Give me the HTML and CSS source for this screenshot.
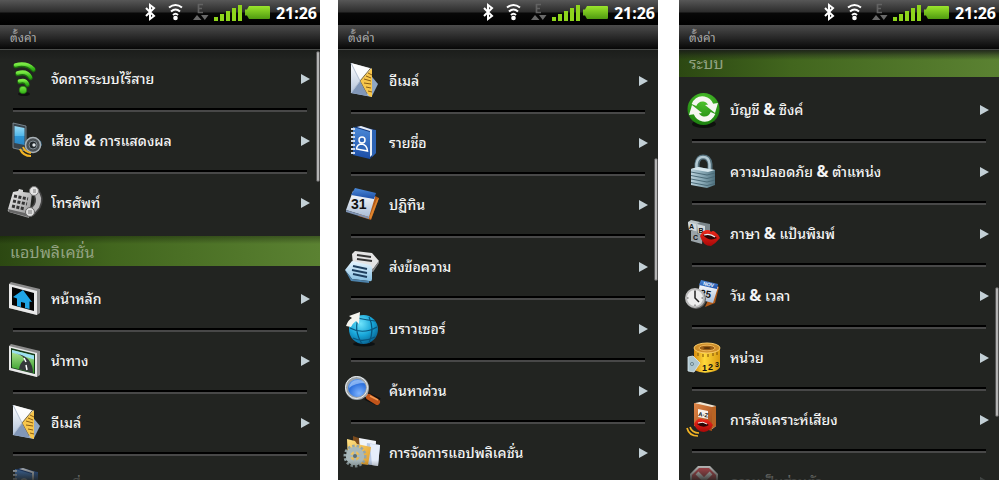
FILE: index.html
```html
<!DOCTYPE html>
<html lang="th">
<head>
<meta charset="utf-8">
<meta name="viewport" content="width=device-width, initial-scale=1">
<title>ตั้งค่า</title>
<link rel="stylesheet" href="styles.css">
</head>
<body>
<svg class="sprite" aria-hidden="true">
  <defs>
    <linearGradient id="g-green" x1="0" y1="0" x2="0" y2="1"><stop offset="0" stop-color="#9be52c"/><stop offset="1" stop-color="#4f9a10"/></linearGradient>
    <linearGradient id="g-wifi" x1="0" y1="0" x2="0" y2="1"><stop offset="0" stop-color="#7bea45"/><stop offset="1" stop-color="#2fae14"/></linearGradient>
    <linearGradient id="g-screen" x1="0" y1="0" x2="0" y2="1"><stop offset="0" stop-color="#9adcf6"/><stop offset=".5" stop-color="#55b9ea"/><stop offset=".52" stop-color="#2e97d6"/><stop offset="1" stop-color="#2a86c4"/></linearGradient>
    <linearGradient id="g-metal" x1="0" y1="0" x2="1" y2="1"><stop offset="0" stop-color="#f4f4f4"/><stop offset="1" stop-color="#8c8c8c"/></linearGradient>
    <linearGradient id="g-paper" x1="0" y1="0" x2="0" y2="1"><stop offset="0" stop-color="#ffffff"/><stop offset="1" stop-color="#a9bcd6"/></linearGradient>
    <linearGradient id="g-blue" x1="0" y1="0" x2="0" y2="1"><stop offset="0" stop-color="#4c8ad8"/><stop offset="1" stop-color="#1c4da6"/></linearGradient>
    <linearGradient id="g-sky" x1="0" y1="0" x2="0" y2="1"><stop offset="0" stop-color="#e8f6ff"/><stop offset="1" stop-color="#86bfe2"/></linearGradient>
    <radialGradient id="g-globe" cx=".4" cy=".3" r=".75"><stop offset="0" stop-color="#6fe3fb"/><stop offset=".55" stop-color="#17a5d8"/><stop offset="1" stop-color="#07608f"/></radialGradient>
    <radialGradient id="g-lens" cx=".6" cy=".75" r=".8"><stop offset="0" stop-color="#7fb4ff"/><stop offset=".6" stop-color="#2c70dc"/><stop offset="1" stop-color="#7db0f2"/></radialGradient>
    <radialGradient id="g-sync" cx=".5" cy=".25" r=".8"><stop offset="0" stop-color="#4fc42e"/><stop offset="1" stop-color="#187c0c"/></radialGradient>
    <linearGradient id="g-lock" x1="0" y1="0" x2="1" y2="0"><stop offset="0" stop-color="#b9d0da"/><stop offset=".5" stop-color="#86a7b4"/><stop offset="1" stop-color="#4f717e"/></linearGradient>
    <linearGradient id="g-gold" x1="0" y1="0" x2="1" y2="0"><stop offset="0" stop-color="#d98d10"/><stop offset=".4" stop-color="#ffd93a"/><stop offset="1" stop-color="#d99a10"/></linearGradient>
    <linearGradient id="g-folder" x1="0" y1="0" x2="1" y2="1"><stop offset="0" stop-color="#ffe184"/><stop offset="1" stop-color="#e09a26"/></linearGradient>
    <linearGradient id="g-red" x1="0" y1="0" x2="0" y2="1"><stop offset="0" stop-color="#f02a1c"/><stop offset="1" stop-color="#a80808"/></linearGradient>
    <linearGradient id="g-book" x1="0" y1="0" x2="1" y2="1"><stop offset="0" stop-color="#e0884a"/><stop offset="1" stop-color="#a04a14"/></linearGradient>
    <linearGradient id="g-grass" x1="0" y1="0" x2="0" y2="1"><stop offset="0" stop-color="#b8e89a"/><stop offset="1" stop-color="#2d9a22"/></linearGradient>
  </defs>

  <symbol id="s-status" viewBox="0 0 128 25">
    <path d="M2 8l8 8-4 3V5l4 3-8 8" fill="none" stroke="#fff" stroke-width="2"/>
    <g fill="none" stroke="#fff" stroke-width="2">
      <path d="M25 7.500q6.500-5 13 0"/><path d="M27 11.500q4.500-4 9 0"/><path d="M29 15q2.500-2.500 5 0"/>
    </g>
    <circle cx="31.500" cy="18" r="2.300" fill="#fff"/>
    <path d="M59 4.500h-4.500v8H59M54.500 8.500H58" fill="none" stroke="#626262" stroke-width="1.700"/>
    <path d="M49 20l4-5 4.500 5zM57 15h7.500l-3.700 5z" fill="#696969"/>
    <g fill="#8ed51c"><path d="M70 17h4v4h-4zM76 14h4v7h-4zM82 11h4v10h-4zM88 8h4v13h-4zM94 5h4v16h-4z"/></g>
    <path d="M101 9.500h2l2-3.500h20q1 0 1 1v11q0 1-1 1h-20l-2-3.500h-2z" fill="url(#g-green)"/>
  </symbol>

  <symbol id="i-wifi" viewBox="0 0 40 40">
    <ellipse cx="19" cy="35" rx="6" ry="2" fill="#111"/>
    <g fill="none" stroke="#1c6d0d" stroke-width="4.500" stroke-linecap="round"><path d="M10.500 7q11-3 18 4"/><path d="M12.500 15q9-3 13 4"/><path d="M14.500 23q6-2 8 3"/></g>
    <g fill="none" stroke="url(#g-wifi)" stroke-width="3.500" stroke-linecap="round"><path d="M10.500 6q11-3 18 4"/><path d="M12.500 14q9-3 13 4"/><path d="M14.500 22q6-2 8 3"/></g>
    <circle cx="18" cy="31" r="3.800" fill="url(#g-wifi)" stroke="#1c6d0d" stroke-width=".6"/>
  </symbol>

  <symbol id="i-sound" viewBox="0 0 40 40">
    <path d="M8 2l13 3v25L8 27z" fill="#39434a" stroke="#8896a0" stroke-width=".8"/>
    <path d="M9.500 5l10 2v17l-10-2z" fill="url(#g-screen)"/>
    <path d="M28 17l8 3 1 4-4 6z" fill="#315f7d"/>
    <circle cx="28" cy="24" r="7.500" fill="#4b5155" stroke="#a9b1b6" stroke-width="1.500"/>
    <circle cx="28" cy="24" r="4" fill="#20262a" stroke="#7f8a91"/><circle cx="29" cy="24" r="1.700" fill="#dfe6ea"/>
    <path d="M18 26q2 5 8 6M15 28q3 7 11 7" fill="none" stroke="#f2b425" stroke-width="2"/>
  </symbol>

  <symbol id="i-phone" viewBox="0 0 40 40">
    <path d="M8 9l5-1 1-2 4 1v2l9 1-3 25L4 29q-2-1-1-3z" fill="url(#g-metal)"/>
    <path d="M3 26l21 5v3L4 29z" fill="#666"/>
    <g stroke="#333" stroke-width="3" stroke-dasharray="3 1.500"><path d="M9 13l14 3M8 18l14 3M7 23l13 3"/></g>
    <path d="M30 8q6 7 2 15l-5 6" fill="none" stroke="#444" stroke-width="8" stroke-linecap="round"/>
    <path d="M30 8q6 7 2 15l-5 6" fill="none" stroke="#b8b8b8" stroke-width="5" stroke-linecap="round"/>
    <circle cx="29" cy="8" r="4.500" fill="#e4e4e4" stroke="#777"/><circle cx="25" cy="29" r="4.500" fill="#ddd" stroke="#666"/>
    <path d="M23 28h4M23 30h4M28 7h3M28 9h3" stroke="#777"/>
  </symbol>

  <symbol id="i-home" viewBox="0 0 40 40">
    <path d="M4 5l2-2 29 7v24l-3 2-28-7z" fill="#8d8d8d"/><path d="M4 5l28 7v24L4 29z" fill="#e9e9e9"/>
    <path d="M7 8l22 6v18L7 26z" fill="#050505"/>
    <path d="M18 11l9 12-2.500-.5V30l-4.500-1V24l-4-1v5l-4-1v-7.500L8 18z" fill="#1fa6e8"/>
  </symbol>

  <symbol id="i-nav" viewBox="0 0 40 40">
    <path d="M4 5l2-2 29 7v24l-3 2-28-7z" fill="#8d8d8d"/><path d="M4 5l28 7v24L4 29z" fill="#e9e9e9"/>
    <path d="M6 7l24 6v20L6 27z" fill="#143a18"/><path d="M7 9l22 5.500V32L7 26.500z" fill="url(#g-grass)"/>
    <path d="M7 9l22 5.500v4L7 11.500z" fill="#9ce1f1"/>
    <path d="M10 12q10 3 9 7-4 3-5 9l14 4q0-8-5-14-4-4-13-6z" fill="#35383a"/>
    <path d="M19 17l2 4M21 24l1 5" stroke="#fff" stroke-width="1.500"/>
  </symbol>

  <symbol id="i-mail" viewBox="0 0 40 40">
    <path d="M25 11l10 12-6 12-5-8z" fill="#8fa7c4"/>
    <path d="M8 2l21 6v28L8 32z" fill="url(#g-paper)"/>
    <path d="M29 7L17 20l9 15 3 1z" fill="#f7c64c"/>
    <path d="M27 8l-10 12 7 13" fill="none" stroke="#7a6128"/>
    <path d="M25 12l4 2M23 15l5 2M21 18l7 2M21 22l7 1M23 26l5 1M25 30l4 1" stroke="#8a5d14"/>
    <path d="M8 32l9-12 8 15z" fill="#8197b8"/><path d="M8 2l9 17L27 7z" fill="#fff" opacity=".8"/><path d="M8 2l9 18L8 32" fill="none" stroke="#b3c0d3"/>
  </symbol>

  <symbol id="i-contacts" viewBox="0 0 40 40">
    <path d="M12 4l5-1 16 4v23l-6 6z" fill="#173c80"/><path d="M14 4l4-1 12 4v24l-3 3V8z" fill="#e8eef7"/>
    <path d="M29 7h4v23l-4 4z" fill="#2d63b4"/>
    <path d="M10 4l17 5v27l-17-4z" fill="url(#g-blue)"/>
    <circle cx="19" cy="17" r="3" fill="#2f66b8" stroke="#fff" stroke-width="1.500"/><path d="M13.500 26q.5-5 5.500-5 5 1 5.500 7z" fill="#2f66b8" stroke="#fff" stroke-width="1.500"/>
    <path d="M8 6h4M8 10h4M8 14h4M8 18h4M8 22h4M8 26h4M8 30h4" stroke="#cfdaea" stroke-width="2"/>
  </symbol>

  <symbol id="i-calendar" viewBox="0 0 40 40">
    <path d="M30 10l6 3-8 22-13-4z" fill="#b25a18"/><path d="M34 14l2-1-8 21-2-1z" fill="#e0862e"/>
    <path d="M10 6l22 6-6 20-23-7z" fill="url(#g-paper)"/><path d="M12 3l21 5-2 6-23-4z" fill="url(#g-blue)"/>
    <path d="M3 25l23 7v2L3 27z" fill="#7f94b5"/>
    <text x="8" y="24" class="glyph glyph-day">31</text>
  </symbol>

  <symbol id="i-message" viewBox="0 0 40 40">
    <path d="M12 4l17 2 7 8-6 8-20-4-1-11z" fill="#e4e4e4"/><path d="M36 14l-6 8-18-4v2l18 5 6-9z" fill="#888"/>
    <path d="M14 8l14 2M14 12l15 2" stroke="#333" stroke-width="2"/>
    <path d="M9 14l18 4q2 1 2 3v11q0 3-3 2L9 32l-7-9z" fill="url(#g-sky)"/><path d="M2 23l7 9 17 2v2L8 34z" fill="#4d82ab"/>
    <path d="M10 19l14 3M9 23l15 3M10 27l14 3" stroke="#1e3f5e" stroke-width="1.800"/>
  </symbol>

  <symbol id="i-globe" viewBox="0 0 40 40">
    <ellipse cx="21" cy="35" rx="11" ry="2.500" fill="#0c1113"/><circle cx="20.500" cy="20.500" r="14.500" fill="url(#g-globe)"/>
    <path d="M7 19q13 7 27-1M10 29q10 5 22-1M14 9q10 2 18 3M16 8q-6 12 3 27M26 8q6 12 0 26" fill="none" stroke="#08567f" stroke-width="1.200"/>
    <path d="M3 17q2-6 6-8L6 7l11-4-1 12-3-3q-4 3-5 6z" fill="#f4f4ee"/>
  </symbol>

  <symbol id="i-search" viewBox="0 0 40 40">
    <path d="M23 25l13 6" stroke="#111" stroke-width="8"/><path d="M22 23l4 3" stroke="#bbb" stroke-width="4"/>
    <path d="M26 26l8 5" stroke="#c0541a" stroke-width="6" stroke-linecap="round"/><path d="M27 25l8 4" stroke="#f29a52" stroke-width="1.500"/>
    <circle cx="14" cy="17" r="10.500" fill="url(#g-lens)" stroke="#9ca3a8" stroke-width="3"/><circle cx="13.500" cy="16.500" r="11" fill="none" stroke="#eceff1" stroke-width="1"/>
    <path d="M6 17q1-8 9-8 5 0 7 3-10 0-16 5z" fill="#b6d5ff" opacity=".6"/>
  </symbol>

  <symbol id="i-apps" viewBox="0 0 40 40">
    <path d="M10 3l14 5v12H10z" fill="#7a4a1c"/><path d="M16 5l17 3-1 24-14-2z" fill="#f0f4fb"/><path d="M24 10l13 2-2 21-13-2z" fill="#b9cae6"/><path d="M27 11l10 1-2 21-6-1z" fill="#e6eefb"/>
    <path d="M4 6l8 2 2 3 14 3-3 18-20-3z" fill="url(#g-folder)"/>
    <circle cx="12" cy="23" r="10" fill="none" stroke="#94a5a8" stroke-width="3" stroke-dasharray="2.500 1.900"/>
    <circle cx="12" cy="23" r="7" fill="none" stroke="#a9b9bc" stroke-width="4.500"/><path d="M12 16v14M5 23h14" stroke="#a9b9bc" stroke-width="2.500"/><circle cx="12" cy="23" r="2" fill="#5d6d70"/>
  </symbol>

  <symbol id="i-sync" viewBox="0 0 40 40">
    <ellipse cx="20" cy="34" rx="12" ry="4" fill="#0e120d"/><circle cx="19.500" cy="19" r="16" fill="url(#g-sync)"/>
    <path d="M10 15q3-7 10-6 5 1 7 6" fill="none" stroke="#f6f6f2" stroke-width="5"/><path d="M21 15l13-2-3 10z" fill="#f6f6f2"/>
    <path d="M29 23q-3 7-10 6-5-1-7-6" fill="none" stroke="#f6f6f2" stroke-width="5"/><path d="M18 23L5 25l3-10z" fill="#f6f6f2"/>
  </symbol>

  <symbol id="i-lock" viewBox="0 0 40 40">
    <path d="M13 20v-8q1-7 6-7 6 0 7 7v9" fill="none" stroke="#54707c" stroke-width="5"/><path d="M12.500 19v-7q1-7 6.500-7 6 0 6.500 7v8" fill="none" stroke="#b4cad3" stroke-width="2.500"/>
    <path d="M7 17l7-2 17 3v15l-8 3-16-3z" fill="url(#g-lock)"/><path d="M7 17l17 3 7-2-17-3z" fill="#d7e7ed"/>
    <path d="M7 20l16 3 8-2M7 23.500l16 3 8-2M7 27l16 3 8-2M7 30.500l16 3 8-2" fill="none" stroke="#4b6b78" stroke-width="1"/>
  </symbol>

  <symbol id="i-language" viewBox="0 0 40 40">
    <path d="M7 17l3-1 9 2-1 12-11-3z" fill="#9aa3a8"/><path d="M4 8l3-2 9 2v10L5 16z" fill="#b9c1c5"/><path d="M13 10l3-2 10 2v9l-5 3-8-2z" fill="#7c878c"/><path d="M4 8l8 2v7l-7-2zM13 10l8 2v9l-7-2z" fill="#d3d9dc"/>
    <text x="5" y="15" class="glyph glyph-key">A</text><text x="14.500" y="19" class="glyph glyph-key">B</text><text x="9" y="26" class="glyph glyph-key">C</text>
    <path d="M16 22q3-7 8-6 2 0 3 2 2-2 4 0 3 2 5 6-4 5-9 8-8 0-11-10z" fill="url(#g-red)"/><path d="M19 21q6-3 14 3-8 4-14-3z" fill="#2a0505"/>
    <path d="M20 21q6-2 11 2" stroke="#eee" fill="none" stroke-width="1.200"/>
  </symbol>

  <symbol id="i-date" viewBox="0 0 40 40">
    <path d="M31 9l4 2-4 16-10 4z" fill="#b25a18"/><path d="M16 7l18 4-5 16-16-4z" fill="url(#g-paper)"/><path d="M17 4l17 4-1 5-18-4z" fill="url(#g-blue)"/>
    <text x="19" y="9" class="glyph glyph-month" transform="rotate(12 19 9)">NOV</text><text x="16" y="21" class="glyph glyph-num" transform="rotate(10 20 18)">25</text>
    <circle cx="12" cy="23" r="10" fill="#666"/><circle cx="11" cy="22" r="9" fill="#eee" stroke="#bbb" stroke-width="2"/>
    <path d="M11 15v7l4 4" fill="none" stroke="#222" stroke-width="1.500"/><path d="M11 14v1.500M11 28.500V30M3 22h1.500M17.500 22H19" stroke="#555"/>
  </symbol>

  <symbol id="i-tape" viewBox="0 0 40 40">
    <path d="M10 10v22q8 4 17 2 7-1 9-5V10z" fill="url(#g-gold)"/><ellipse cx="23" cy="10" rx="13" ry="5" fill="#cf8e2a" stroke="#f6c865"/>
    <ellipse cx="23" cy="10" rx="8" ry="2.800" fill="#9c5f16" stroke="#efb95a"/><ellipse cx="23" cy="10" rx="3.500" ry="1" fill="#5d3509"/>
    <path d="M14 15v3M19 16v3M24 16v3M29 15v3M33 14v3" stroke="#7a4c06"/>
    <text x="18" y="33" class="glyph glyph-mark">1</text><text x="24" y="32" class="glyph glyph-mark">2</text><text x="31" y="29" class="glyph glyph-key">3</text>
    <path d="M4 19l5-1 7 7-6 9-6-1z" fill="#aec6cf" stroke="#dceaf0" stroke-width=".8"/><circle cx="8" cy="26" r="1.600" fill="none" stroke="#6d8791"/>
  </symbol>

  <symbol id="i-speech" viewBox="0 0 40 40">
    <path d="M11 3l5-1 16 4v20l-5 4z" fill="#f0e6d4"/><path d="M28 7l4-1v20l-4 3z" fill="#b86424"/><path d="M10 3l18 4v24L10 26z" fill="url(#g-book)"/><path d="M14 9l10 2v8l-10-2z" fill="#f7f2ea"/>
    <text x="14" y="16" class="glyph glyph-az" transform="rotate(8 14 16)">A-Z</text>
    <path d="M10 24q3-6 8-5l2 1q2-1 4 0 3 2 5 5-3 6-9 7-7 0-10-8z" fill="url(#g-red)"/><path d="M13 24q6-3 12 1-6 4-12-1z" fill="#2a0505"/><path d="M14 23q5-2 9 1" stroke="#eee" fill="none"/>
    <path d="M6 27q2 6 9 6M3 28q2 8 11 8" fill="none" stroke="#f2b425" stroke-width="1.700"/>
  </symbol>

  <symbol id="i-privacy" viewBox="0 0 40 40">
    <path d="M14 4h12l8 8v12l-8 9H14l-8-9V12z" fill="#e9e9e9"/><path d="M15 6h10l7 7v10l-7 8H15l-7-8V13z" fill="#d8525a"/>
    <path d="M13 11l14 14M27 11L13 25" stroke="#fff" stroke-width="4"/>
  </symbol>
</svg>

<main class="screens">
  <section class="phone phone-first">
    <div class="statusbar"><svg class="status-icons" aria-hidden="true"><use href="#s-status"/></svg><time>21:26</time></div>
    <h1 class="titlebar">ตั้งค่า</h1>
    <div class="viewport">
      <ul class="list">
        <li><a class="row" href="#"><svg class="icon"><use href="#i-wifi"/></svg><span class="label">จัดการระบบไร้สาย</span></a></li>
        <li><a class="row" href="#"><svg class="icon"><use href="#i-sound"/></svg><span class="label">เสียง <b>&amp;</b> การแสดงผล</span></a></li>
        <li><a class="row" href="#"><svg class="icon"><use href="#i-phone"/></svg><span class="label">โทรศัพท์</span></a></li>
      </ul>
      <h2 class="group">แอปพลิเคชั่น</h2>
      <ul class="list">
        <li><a class="row" href="#"><svg class="icon"><use href="#i-home"/></svg><span class="label">หน้าหลัก</span></a></li>
        <li><a class="row" href="#"><svg class="icon"><use href="#i-nav"/></svg><span class="label">นำทาง</span></a></li>
        <li><a class="row" href="#"><svg class="icon"><use href="#i-mail"/></svg><span class="label">อีเมล์</span></a></li>
        <li><a class="row" href="#"><svg class="icon"><use href="#i-contacts"/></svg><span class="label">รายชื่อ</span></a></li>
      </ul>
      <div class="thumb thumb-top"></div>
    </div>
  </section>

  <section class="phone phone-second">
    <div class="statusbar"><svg class="status-icons" aria-hidden="true"><use href="#s-status"/></svg><time>21:26</time></div>
    <h1 class="titlebar">ตั้งค่า</h1>
    <div class="viewport viewport-middle">
      <ul class="list">
        <li><a class="row" href="#"><svg class="icon"><use href="#i-mail"/></svg><span class="label">อีเมล์</span></a></li>
        <li><a class="row" href="#"><svg class="icon"><use href="#i-contacts"/></svg><span class="label">รายชื่อ</span></a></li>
        <li><a class="row" href="#"><svg class="icon"><use href="#i-calendar"/></svg><span class="label">ปฏิทิน</span></a></li>
        <li><a class="row" href="#"><svg class="icon"><use href="#i-message"/></svg><span class="label">ส่งข้อความ</span></a></li>
        <li><a class="row" href="#"><svg class="icon"><use href="#i-globe"/></svg><span class="label">บราวเซอร์</span></a></li>
        <li><a class="row" href="#"><svg class="icon"><use href="#i-search"/></svg><span class="label">ค้นหาด่วน</span></a></li>
        <li><a class="row" href="#"><svg class="icon"><use href="#i-apps"/></svg><span class="label">การจัดการแอปพลิเคชั่น</span></a></li>
      </ul>
      <div class="thumb thumb-middle"></div>
    </div>
  </section>

  <section class="phone phone-third">
    <div class="statusbar"><svg class="status-icons" aria-hidden="true"><use href="#s-status"/></svg><time>21:26</time></div>
    <h1 class="titlebar">ตั้งค่า</h1>
    <div class="viewport">
      <h2 class="group group-scrolled">ระบบ</h2>
      <ul class="list">
        <li><a class="row" href="#"><svg class="icon"><use href="#i-sync"/></svg><span class="label">บัญชี <b>&amp;</b> ซิงค์</span></a></li>
        <li><a class="row" href="#"><svg class="icon"><use href="#i-lock"/></svg><span class="label">ความปลอดภัย <b>&amp;</b> ตำแหน่ง</span></a></li>
        <li><a class="row" href="#"><svg class="icon"><use href="#i-language"/></svg><span class="label">ภาษา <b>&amp;</b> แป้นพิมพ์</span></a></li>
        <li><a class="row" href="#"><svg class="icon"><use href="#i-date"/></svg><span class="label">วัน <b>&amp;</b> เวลา</span></a></li>
        <li><a class="row" href="#"><svg class="icon"><use href="#i-tape"/></svg><span class="label">หน่วย</span></a></li>
        <li><a class="row" href="#"><svg class="icon"><use href="#i-speech"/></svg><span class="label">การสังเคราะห์เสียง</span></a></li>
        <li><a class="row" href="#"><svg class="icon"><use href="#i-privacy"/></svg><span class="label">ความเป็นส่วนตัว</span></a></li>
      </ul>
      <div class="thumb thumb-bottom"></div>
    </div>
  </section>
</main>
</body>
</html>
```
FILE: styles.css
```css
*, *::before, *::after { box-sizing: border-box; }

body {
  margin: 0;
  background: #fff;
  font-family: "Noto Sans", "Droid Sans Thai", "Noto Sans Thai Looped", "Noto Looped Thai", Loma, Waree, sans-serif;
}

.sprite {
  position: absolute;
  width: 0;
  height: 0;
}

.screens {
  display: grid;
  grid-template-columns: 1fr 18px 1fr 21px 1fr;
  height: 100vh;
}

.phone {
  display: flex;
  flex-direction: column;
  min-width: 0;
  min-height: 0;
  background: #222421;
}

.phone-first { grid-column: 1; }
.phone-second { grid-column: 3; }
.phone-third { grid-column: 5; }

.statusbar {
  display: flex;
  flex: none;
  align-items: center;
  justify-content: flex-end;
  gap: 4px;
  height: 25px;
  padding-right: 3px;
  background: linear-gradient(#575757, #2c2c2c 48%, #080808 52%, #000);
  color: #fff;
  font-size: 16px;
  font-weight: 700;
  line-height: 26px;
}

.status-icons {
  width: 128px;
  height: 25px;
}

.titlebar {
  flex: none;
  height: 25px;
  margin: 0;
  padding-left: 10px;
  border-bottom: 1px solid #4a4c4a;
  background: linear-gradient(#4c4c4c, #070707);
  color: #aaa;
  font-size: 12px;
  font-weight: 400;
  line-height: 25px;
}

.viewport {
  position: relative;
  flex: 1;
  min-height: 0;
  overflow: hidden;
}

.viewport-middle { padding-top: 2px; }

/* Fades the list out at both scroll edges. */
.viewport::after {
  content: "";
  position: absolute;
  inset: 0;
  background: linear-gradient(#1a1c1acc, #1a1c1a00 10px, #22242100 calc(100% - 20px), #222421dd);
  pointer-events: none;
}

.list {
  margin: 0;
  padding: 0;
  list-style: none;
}

.list li {
  height: 62px;
}

.list li:not(:last-child)::after {
  content: "";
  display: block;
  height: 4px;
  margin: 0 13px;
  border-top: 2px solid #000;
  border-bottom: 2px solid #484848;
}

.row {
  display: flex;
  align-items: center;
  height: 58px;
  padding: 0 10px 0 5px;
  color: #f4f4f4;
  text-decoration: none;
}

.row::after {
  content: "";
  border: solid transparent;
  border-width: 5px 0 5px 9px;
  border-left-color: #c3d0d6;
}

.icon {
  flex: none;
  width: 40px;
  height: 40px;
  margin-right: 6px;
}

.label {
  flex: 1;
  overflow: hidden;
  font-size: 14px;
  font-weight: 500;
  line-height: 40px;
  white-space: nowrap;
}

.label b {
  font-size: 16px;
  font-weight: 700;
  line-height: 1;
}

.group {
  height: 30px;
  margin: 0 0 4px;
  padding-left: 10px;
  background: linear-gradient(#0005, #0000 8px), linear-gradient(90deg, #2c4812, #42661e 35%, #5b8232);
  color: #93a382;
  font-size: 16px;
  font-weight: 400;
  line-height: 32px;
}

.group-scrolled { margin-top: -3px; }

.thumb {
  position: absolute;
  z-index: 1;
  right: 0;
  width: 4px;
  border: 1px solid #555;
  border-radius: 2px;
  background: #b4b4b4;
}

.thumb-top { top: 1px; height: 131px; }
.thumb-middle { top: 25%; height: 123px; }
.thumb-bottom { top: 55%; height: 130px; }

.glyph {
  fill: #111;
  font-family: "Liberation Sans", sans-serif;
  font-weight: 700;
}

.glyph-day { font-size: 14px; }
.glyph-num { font-size: 10px; }
.glyph-mark { font-size: 9px; }
.glyph-key { font-size: 7px; }
.glyph-az { font-size: 6px; }
.glyph-month { fill: #fff; font-size: 5px; }
```
